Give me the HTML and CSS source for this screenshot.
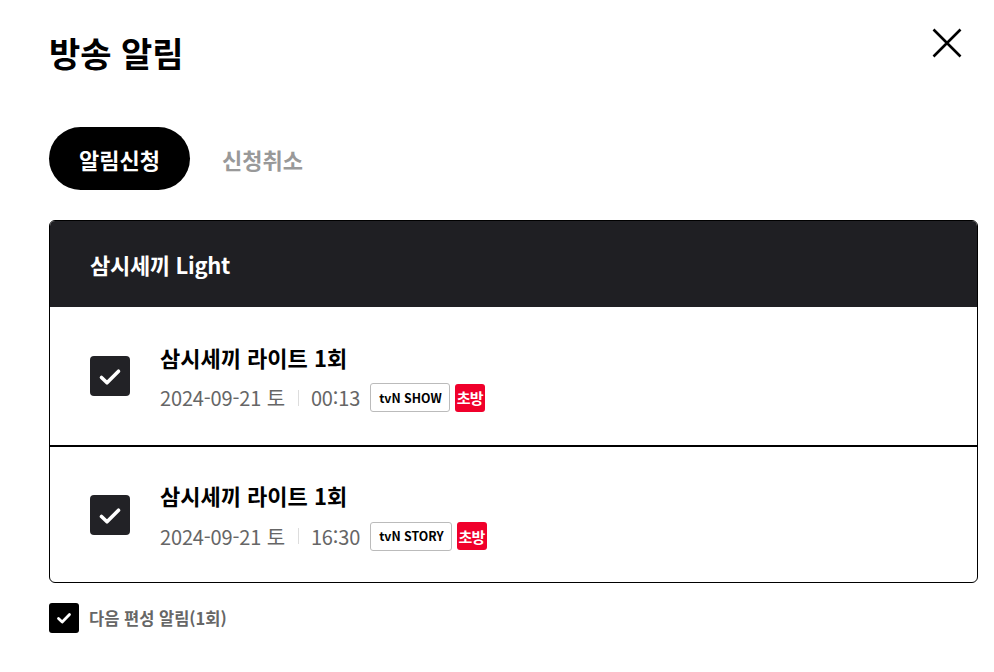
FILE: index.html
```html
<!DOCTYPE html>
<html lang="ko">
<head>
<meta charset="utf-8">
<link rel="stylesheet" href="styles.css">
</head>
<body>
<div class="popup">
  <div class="top">
    <h1 class="title">방송 알림</h1>
    <button class="close" aria-label="닫기">
      <svg width="30" height="30" viewBox="0 0 30 30"><path d="M1.5 1.5 L28.5 28.5 M28.5 1.5 L1.5 28.5" stroke="#000" stroke-width="2.6" fill="none"/></svg>
    </button>
  </div>
  <div class="tabs">
    <button class="tab active">알림신청</button>
    <button class="tab">신청취소</button>
  </div>
  <div class="card">
    <div class="card-head">삼시세끼 Light</div>
    <div class="item">
      <span class="chk"><svg width="40" height="40" viewBox="0 0 40 40"><path d="M11.5 21.5 L17 26.8 L28.5 15.2" stroke="#fff" stroke-width="3.6" fill="none" stroke-linecap="round" stroke-linejoin="round"/></svg></span>
      <div class="info">
        <div class="ep">삼시세끼 라이트 1회</div>
        <div class="meta"><span>2024-09-21 토</span><i class="sep"></i><span>00:13</span><span class="ch">tvN SHOW</span><span class="first">초방</span></div>
      </div>
    </div>
    <div class="item">
      <span class="chk"><svg width="40" height="40" viewBox="0 0 40 40"><path d="M11.5 21.5 L17 26.8 L28.5 15.2" stroke="#fff" stroke-width="3.6" fill="none" stroke-linecap="round" stroke-linejoin="round"/></svg></span>
      <div class="info">
        <div class="ep">삼시세끼 라이트 1회</div>
        <div class="meta"><span>2024-09-21 토</span><i class="sep"></i><span>16:30</span><span class="ch">tvN STORY</span><span class="first">초방</span></div>
      </div>
    </div>
  </div>
  <label class="next">
    <span class="chk-sm"><svg width="30" height="30" viewBox="0 0 30 30"><path d="M9.5 15.5 L13.2 19 L20.5 11.5" stroke="#fff" stroke-width="2.8" fill="none" stroke-linecap="round" stroke-linejoin="round"/></svg></span>
    <span class="next-text">다음 편성 알림(1회)</span>
  </label>
</div>
</body>
</html>
```
FILE: styles.css
```css
* { box-sizing: border-box; }
html, body { margin: 0; padding: 0; background: #fff; }
body { font-family: "Noto Sans CJK KR", "Noto Sans", sans-serif; color: #000; }
.popup { padding: 24px 16px 0 49px; }
.top { display: flex; justify-content: space-between; align-items: flex-start; }
.title { margin: 0; font-size: 34px; font-weight: 700; line-height: 58px; }
.close { border: 0; background: none; padding: 0; margin: 4px 16px 0 0; width: 30px; height: 30px; display: block; }
.close svg { display: block; }
.tabs { display: flex; align-items: center; margin-top: 45px; }
.tab { font-family: inherit; border: 0; background: none; font-size: 22px; font-weight: 700; color: #999; height: 63px; padding: 0 0 0 32px; border-radius: 32px; }
.tab.active { background: #000; color: #fff; width: 141px; padding: 0; }
.card { margin-top: 30px; border: 1px solid #000; border-radius: 6px; overflow: hidden; }
.card-head { background: #1f1f23; color: #fff; height: 86px; display: flex; align-items: center; padding-left: 40px; font-size: 22px; font-weight: 700; letter-spacing: -0.3px; }
.item { display: flex; align-items: center; height: 138px; padding-left: 40px; }
.item + .item { border-top: 2px solid #000; height: 137px; }
.chk { width: 40px; height: 40px; border-radius: 4px; background: #222226; display: flex; flex: none; }
.chk svg, .chk-sm svg { display: block; }
.info { margin-left: 30px; padding-top: 2px; }
.ep { font-size: 22px; font-weight: 700; line-height: 30px; }
.meta { display: flex; align-items: center; margin-top: 11px; font-size: 20px; color: #666; height: 30px; letter-spacing: -0.15px; }
.sep { display: inline-block; width: 1px; height: 16px; background: #ddd; margin: 0 12px 0 13px; }
.ch { margin-left: 10px; border: 1px solid #bbb; border-radius: 3px; height: 29px; padding: 0 7px 0 8px; display: flex; align-items: center; font-size: 12.3px; font-weight: 700; color: #000; letter-spacing: 0; }
.first { margin-left: 5px; background: #f0002b; color: #fff; border-radius: 3px; height: 28px; width: 30px; display: flex; align-items: center; justify-content: center; font-size: 15px; font-weight: 700; letter-spacing: -0.8px; }
.next { display: flex; align-items: center; margin-top: 20px; }
.chk-sm { width: 30px; height: 30px; border-radius: 3px; background: #000; display: flex; }
.next-text { margin-left: 10px; font-size: 16.5px; font-weight: 700; color: #666; }
```
